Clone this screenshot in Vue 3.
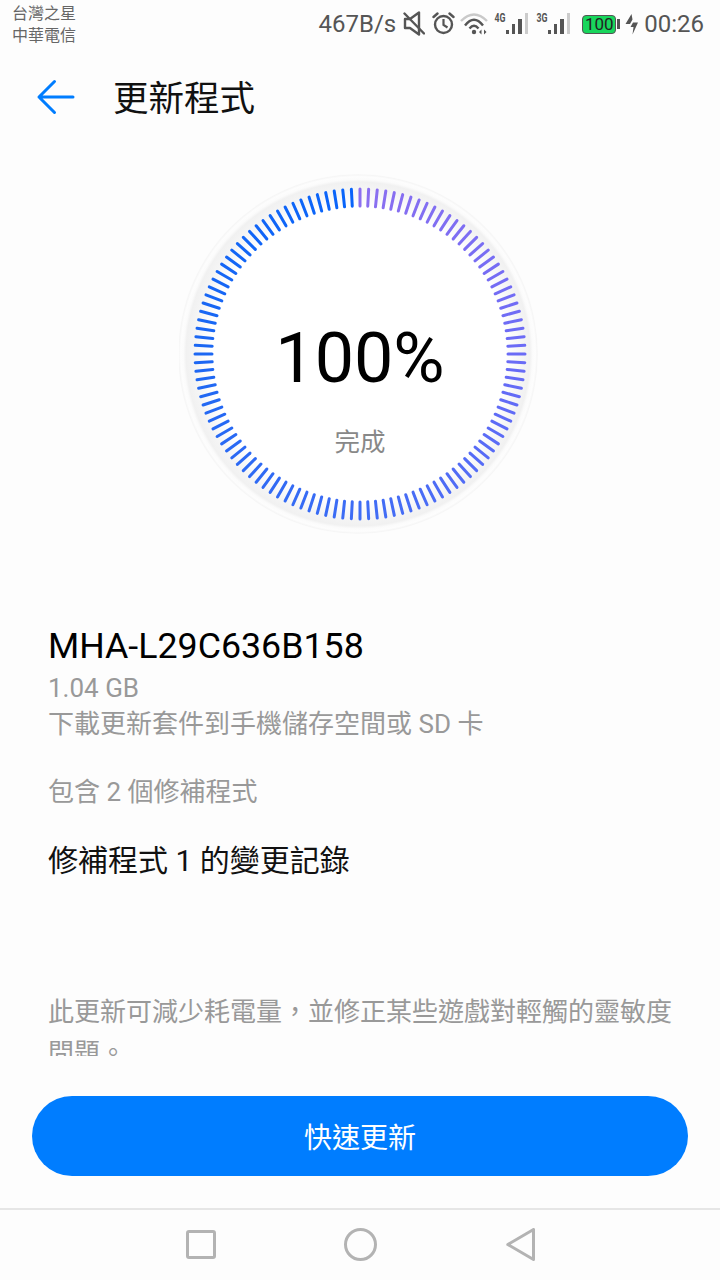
<template>
  <div class="screen">
    <!-- 狀態列 -->
    <div class="status-bar">
      <div class="carrier">
        <span>台灣之星</span>
        <span>中華電信</span>
      </div>
      <div class="status-right">
        <span class="speed">467B/s</span>
        <svg class="mute" width="22" height="48" viewBox="0 0 22 48">
          <path d="M2 19h5l9-6.500v22L7 28H2z" fill="none" stroke="#555" stroke-width="2.400" stroke-linejoin="round" />
          <path d="M1.500 13.500L21 33.500" stroke="#555" stroke-width="2.400" stroke-linecap="round" />
        </svg>
        <svg class="alarm" width="23" height="48" viewBox="0 0 23 48">
          <circle cx="11.500" cy="24.500" r="8.500" fill="none" stroke="#555" stroke-width="2.400" />
          <path d="M11.500 19v6l4 2.500" fill="none" stroke="#555" stroke-width="2.200" />
          <path d="M1.500 17l4-3.500M21.500 17l-4-3.500" stroke="#555" stroke-width="2.400" stroke-linecap="round" />
        </svg>
        <svg class="wifi" width="28" height="48" viewBox="0 0 28 48">
          <path d="M1 21Q14 8 27 21" fill="none" stroke="#c9c9c9" stroke-width="2.400" />
          <path d="M5 25.500Q14 14 23 25.500" fill="none" stroke="#555" stroke-width="2.400" />
          <path d="M9.500 28.500Q14 23 18.500 28.500" fill="none" stroke="#555" stroke-width="2.400" />
          <circle cx="14" cy="32" r="2.200" fill="#555" />
          <path d="M21.500 29.500v5L19 32zM24 29.500v5l2.500-2.500z" fill="#555" />
        </svg>
        <svg v-for="net in networks" :key="net" class="signal" width="35" height="48" viewBox="0 0 35 48">
          <text x="1.500" y="21.500" class="net" textLength="11" lengthAdjust="spacingAndGlyphs">{{ net }}</text>
          <rect x="13" y="30" width="3" height="4" fill="#555" />
          <rect x="19" y="24" width="3" height="10" fill="#555" />
          <rect x="25" y="19" width="4" height="15" fill="#555" />
          <rect x="32" y="13" width="3" height="21" fill="#ccc" />
        </svg>
        <div class="battery"><span class="battery-level">100</span></div>
        <span class="battery-cap"></span>
        <svg class="bolt" width="13" height="48" viewBox="0 0 13 48">
          <path d="M6.500 14L.5 24H5l2.500-4.500zM13 22.500H8L5.500 27h3l-1 7.500z" fill="#555" />
        </svg>
        <span class="clock">00:26</span>
      </div>
    </div>

    <!-- 標題列 -->
    <div class="toolbar">
      <svg width="40" height="40" viewBox="0 0 40 40">
        <path d="M18.500 5.500L3 21l15.500 15.500M3 21h34" fill="none" stroke="#007dff" stroke-width="3" stroke-linecap="round" stroke-linejoin="round" />
      </svg>
      <h1>更新程式</h1>
    </div>

    <div class="content">
      <!-- 進度圓環 -->
      <div class="dial">
        <svg width="362" height="362" viewBox="-181 -181 362 362">
          <defs>
            <radialGradient id="ring" gradientUnits="userSpaceOnUse" cx="-2" cy="0" r="180">
              <stop offset="0.82" stop-color="#ffffff" />
              <stop offset="0.9" stop-color="#f6f6f6" />
              <stop offset="0.955" stop-color="#f1f1f1" />
              <stop offset="0.97" stop-color="#fbfbfb" />
              <stop offset="0.985" stop-color="#fdfdfd" />
              <stop offset="0.995" stop-color="#f6f6f6" />
              <stop offset="1" stop-color="#fafafa" />
            </radialGradient>
          </defs>
          <circle cx="-2" r="180" fill="url(#ring)" />
          <line
            v-for="tick in ticks"
            :key="tick.id"
            :x1="tick.x1"
            :y1="tick.y1"
            :x2="tick.x2"
            :y2="tick.y2"
            :stroke="tick.color"
            stroke-width="3"
            stroke-linecap="round"
          />
        </svg>
        <div class="dial-text">
          <div class="percent">100%</div>
          <div class="done">完成</div>
        </div>
      </div>

      <!-- 版本資訊 -->
      <div class="info">
        <div class="version">MHA-L29C636B158</div>
        <p class="gray size">1.04 GB</p>
        <p class="gray">下載更新套件到手機儲存空間或 SD 卡</p>
        <p class="gray patches">包含 2 個修補程式</p>
        <div class="log-title">修補程式 1 的變更記錄</div>
        <p class="gray log-body">此更新可減少耗電量，並修正某些遊戲對輕觸的靈敏度問題。</p>
      </div>
    </div>

    <div class="action">
      <button class="update-btn">快速更新</button>
    </div>

    <!-- 導覽列 -->
    <div class="nav-bar">
      <svg width="30" height="29" viewBox="0 0 30 29">
        <rect x="1.500" y="1.500" width="27" height="26" rx="1.500" fill="none" stroke="#b3b3b3" stroke-width="3" />
      </svg>
      <svg width="33" height="33" viewBox="0 0 33 33">
        <circle cx="16.500" cy="16.500" r="15" fill="none" stroke="#b3b3b3" stroke-width="3" />
      </svg>
      <svg width="29" height="33" viewBox="0 0 29 33">
        <path d="M27.500 1.500v30L1.800 16.500z" fill="none" stroke="#b3b3b3" stroke-width="3" stroke-linejoin="round" />
      </svg>
    </div>
  </div>
</template>

<script setup>
import { computed } from 'vue';

const networks = ['4G', '3G'];

const stops = [
  [0, [139, 111, 240]],
  [90, [106, 107, 246]],
  [180, [62, 108, 245]],
  [270, [28, 103, 243]],
  [360, [8, 100, 250]]
];

// 依角度取顏色
const colorAt = (deg) => {
  for (let i = 1; i < stops.length; i++) {
    if (deg <= stops[i][0]) {
      const [a, ca] = stops[i - 1];
      const [b, cb] = stops[i];
      const t = (deg - a) / (b - a);
      const mix = ca.map((v, k) => Math.round(v + (cb[k] - v) * t));
      return `rgb(${mix.join(',')})`;
    }
  }
  return 'rgb(8,100,250)';
};

const ticks = computed(() => {
  const list = [];
  for (let i = 0; i < 120; i++) {
    const deg = i * 3;
    const rad = (deg * Math.PI) / 180;
    const s = Math.sin(rad);
    const c = Math.cos(rad);
    list.push({
      id: i,
      x1: (s * 148).toFixed(2),
      y1: (-c * 148).toFixed(2),
      x2: (s * 165).toFixed(2),
      y2: (-c * 165).toFixed(2),
      color: colorAt(deg)
    });
  }
  return list;
});
</script>

<style scoped>
.screen {
  width: 720px;
  height: 1280px;
  display: flex;
  flex-direction: column;
  background: #fdfdfd;
  font-family: Roboto, "Noto Sans CJK TC", sans-serif;
  overflow: hidden;
}

.status-bar {
  height: 48px;
  padding: 0 16px 0 12px;
  box-sizing: border-box;
  display: flex;
  justify-content: space-between;
  flex-shrink: 0;
}

.carrier {
  display: flex;
  flex-direction: column;
  padding-top: 3px;
  font-size: 16px;
  line-height: 22px;
  color: #666;
}

.status-right {
  display: flex;
  align-items: center;
  height: 48px;
  color: #555;
}

.speed,
.clock {
  font-size: 24px;
  line-height: 50px;
}

.speed {
  margin-right: 7px;
}

.mute {
  margin-right: 7px;
}

.alarm {
  margin-right: 5px;
}

.wifi {
  margin-right: 5px;
}

.signal {
  margin-right: 7px;
}

.net {
  font-size: 12px;
  font-weight: 700;
  fill: #555;
}

.signal + .battery {
  margin-left: 5px;
}

.battery {
  width: 32px;
  height: 17px;
  border: 1.500px solid #555;
  border-radius: 4px;
  background: #18d65c;
  display: flex;
  align-items: center;
  justify-content: center;
}

.battery-level {
  font-size: 17px;
  line-height: 17px;
  color: #222;
}

.battery-cap {
  width: 3px;
  height: 10px;
  margin-left: 1px;
  background: #555;
}

.bolt {
  margin: 0 6px 0 5px;
}

.toolbar {
  height: 96px;
  flex-shrink: 0;
  padding-left: 36px;
  display: flex;
  align-items: center;
  gap: 37px;
}

.toolbar h1 {
  margin: 0 0 2px;
  font-size: 35.500px;
  font-weight: 400;
  color: #111;
}

.content {
  height: 912px;
  flex-shrink: 0;
  overflow: hidden;
}

.dial {
  position: relative;
  width: 362px;
  height: 362px;
  margin: 29px auto 0;
}

.dial-text {
  position: absolute;
  inset: 0;
  display: flex;
  flex-direction: column;
  align-items: center;
  padding-top: 143px;
  box-sizing: border-box;
}

.percent {
  font-size: 70px;
  line-height: 84px;
  color: #000;
}

.done {
  margin-top: 25px;
  font-size: 25.500px;
  line-height: 34px;
  color: #888;
}

.info {
  padding: 0 48px;
  margin-top: 91px;
}

.version {
  font-size: 35.750px;
  line-height: 40px;
  color: #000;
}

.gray {
  margin: 0;
  font-size: 26px;
  line-height: 38px;
  color: #999;
}

.size {
  margin-top: 5px;
  line-height: 34px;
}

.patches {
  margin-top: 30px;
}

.log-title {
  margin-top: 29px;
  font-size: 30px;
  line-height: 42px;
  color: #111;
}

.log-body {
  margin-top: 110px;
  line-height: 41px;
  width: 630px;
}

.action {
  flex-shrink: 0;
  padding: 40px 32px 32px;
}

.update-btn {
  display: block;
  width: 100%;
  height: 80px;
  padding: 0;
  border: none;
  border-radius: 40px;
  background: #007dff;
  color: #fff;
  font-family: inherit;
  font-size: 28px;
}

.nav-bar {
  flex-shrink: 0;
  height: 72px;
  border-top: 2px solid #e6e6e6;
  padding-bottom: 2px;
  box-sizing: border-box;
  display: flex;
  justify-content: center;
  align-items: center;
  gap: 128.500px;
}
</style>
